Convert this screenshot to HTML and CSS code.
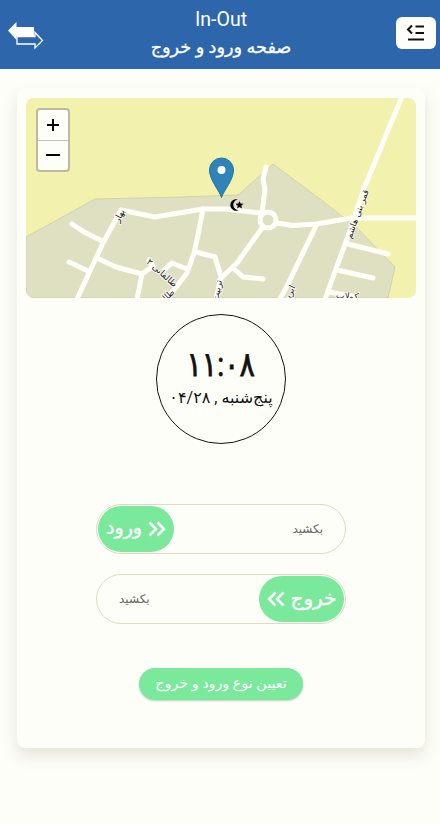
FILE: index.html
```html
<!DOCTYPE html>
<html lang="fa" dir="rtl">
<head>
<meta charset="utf-8">
<meta name="viewport" content="width=device-width, initial-scale=1">
<title>In-Out</title>
<link rel="stylesheet" href="styles.css">
</head>
<body>
<header class="header">
  <button class="menu" aria-label="منو">
    <svg width="20" height="18" viewBox="0 0 20 18" fill="none" stroke="#111" stroke-width="2"><path d="M6 1.500L2 5.500l4 4M9.500 2.500H18M9.500 9H18M2 15.500h16"/></svg>
  </button>
  <div class="titles">
    <div class="title-en">In-Out</div>
    <h1 class="title-fa">صفحه ورود و خروج</h1>
  </div>
  <svg class="swap" width="37" height="30" viewBox="0 0 37 30"><path d="M1 10.500L9.500 2v5H27v9H9.500v4z" fill="#fff"/><path d="M10 16.500h18V12.500l7.500 8-7.500 7.500v-4H10z" fill="#2d66ab" stroke="#fff" stroke-width="1.300"/></svg>
</header>
<main class="card">
  <div class="map">
    <svg class="map-canvas" viewBox="26 98 390 200" width="390" height="200">
      <path class="area" d="M26 237L95 199 180 197 238 195 273 164 320 199 357 228 395 267 388 298H26z"/>
      <g class="roads">
        <path d="M121 210L103 243 77 299"/>
        <path d="M121 210L155 217 203 209 226 209 260 213"/>
        <path d="M276 223L293 225.500 316 224 352 218H417"/>
        <path d="M403 94L363 191 352 225 325 299"/>
        <path d="M266 167L263 179 265 190 262 213"/>
        <path d="M72 224L84 232 102 241M69 262L88 271"/>
        <path d="M97 258L116 267 142 274 137 299M142 274L153 266 149 260"/>
        <path d="M165 269L172 263 187 269"/>
        <path d="M203 209L198 235 194 253 187 273 174 290 165 299"/>
        <path d="M196 252L215 257 221 277 216 299"/>
        <path d="M262 228L237 263 220 279M233 268L243 277 263 279"/>
        <path d="M316 226L286 288 280 299"/>
        <path d="M348 244L388 254M337 270L373 278M328 292L353 296"/>
        <circle cx="268" cy="220" r="8"/>
      </g>
      <g class="labels">
        <text transform="translate(122 217) rotate(-62)">بهار</text>
        <text transform="translate(160 275) rotate(42)">طالقانی ۲</text>
        <text transform="translate(164 303) rotate(-42)">طالقانی</text>
        <text transform="translate(220 291) rotate(-79)">تربیت</text>
        <text transform="translate(290 299) rotate(-65)">ابریشم</text>
        <text class="wide" transform="translate(360 215) rotate(-70)">قمر بنی هاشم</text>
        <text transform="translate(347 299) rotate(5)">کولاب</text>
      </g>
      <path fill="#000" d="M238 199.500a5.800 5.800 0 1 0 1 10.500 5 5 0 1 1-1-10.500zM239.500 201l1.100 2.600 2.900.2-2.200 1.900.7 2.800-2.500-1.500-2.400 1.500.6-2.800-2.200-1.900 2.900-.2z"/>
      <path d="M221.500 197.500C219 190 209.500 180 209.500 170a12 12 0 0 1 24 0c0 10-9.500 20-12 27.500z" fill="#2d84b8" stroke="#2875a3"/>
      <circle cx="221.500" cy="170" r="4" fill="#fff"/>
    </svg>
    <div class="zoom"><button class="zoom-in" aria-label="بزرگ‌نمایی"><svg width="14" height="14" viewBox="0 0 14 14"><path d="M1 7h12M7 1v12"/></svg></button><button aria-label="کوچک‌نمایی"><svg width="14" height="14" viewBox="0 0 14 14"><path d="M0 7h14"/></svg></button></div>
  </div>
  <div class="clock">
    <div class="time" dir="ltr">۱۱:۰۸</div>
    <div class="date">پنج‌شنبه , ۰۴/۲۸</div>
  </div>
  <div class="slider enter">
    <span class="hint">بکشید</span>
    <div class="knob"><svg class="chev" width="18" height="16" viewBox="0 0 18 16"><path d="M1.500 1.500L8 8l-6.500 6.500M9.500 1.500L16 8l-6.500 6.500"/></svg><span>ورود</span></div>
  </div>
  <div class="slider leave">
    <div class="knob"><span>خروج</span><svg class="chev" width="18" height="16" viewBox="0 0 18 16"><path d="M1.500 1.500L8 8l-6.500 6.500M9.500 1.500L16 8l-6.500 6.500"/></svg></div>
    <span class="hint">بکشید</span>
  </div>
  <button class="type">تعیین نوع ورود و خروج</button>
</main>
</body>
</html>
```
FILE: styles.css
```css
* { box-sizing: border-box; }
body { margin: 0; min-height: 824px; background: #fefef9; color: #111; font-family: Roboto, "DejaVu Sans", sans-serif; }
button { font: inherit; border: 0; padding: 0; }
.header { height: 69px; background: #2d66ab; display: flex; align-items: center; justify-content: space-between; padding: 0 4px 0 7px; }
.menu { width: 40px; height: 32px; border-radius: 6px; background: #fefef9; display: flex; align-items: center; justify-content: center; margin-top: -3px; }
.titles { color: #fff; text-align: center; padding: 0 0 1px 0; margin-right: -2px; }
.title-en { font-size: 19.5px; line-height: 26px; }
.title-fa { margin: 0; font-size: 17.7px; line-height: 28px; font-weight: 400; -webkit-text-stroke: .3px; }
.card { width: 408px; height: 660px; margin: 19px 15px 0 auto; padding: 10px 9px 0; border-radius: 8px; display: flex; flex-direction: column; align-items: center; box-shadow: 0 8px 16px rgba(60, 60, 0, .13); }
.map { position: relative; width: 390px; height: 200px; border-radius: 8px; overflow: hidden; background: #f2f2ae; flex: none; }
.map-canvas { display: block; }
.area { fill: #dfdfc2; stroke: #c8c8a4; stroke-width: .7; }
.roads { fill: none; stroke: #fffffa; stroke-width: 5; stroke-linecap: round; stroke-linejoin: round; }
.labels { font-family: "DejaVu Sans", sans-serif; font-size: 9px; text-anchor: middle; fill: #222; stroke: #fff; stroke-width: 1.500px; paint-order: stroke; }
.wide { font-size: 8.6px; }
.zoom { position: absolute; left: 10px; top: 10px; width: 34px; height: 64px; border: 2px solid #babaa0; border-radius: 4px; background: #fefef9; display: flex; flex-direction: column; }
.zoom button { flex: 1; background: none; display: flex; align-items: center; justify-content: center; }
.zoom .zoom-in { border-bottom: 1px solid #c4c4b8; }
.zoom path { stroke: #000; stroke-width: 2; }
.clock { width: 130px; height: 130px; margin-top: 16px; border: 1px solid #111; border-radius: 50%; display: flex; flex-direction: column; align-items: center; padding-top: 29px; flex: none; white-space: nowrap; }
.time { font-size: 34px; line-height: 40px; letter-spacing: -2.5px; -webkit-text-stroke: .8px; transform: scaleX(.84); }
.date { font-size: 16px; line-height: 27px; }
.slider { width: 250px; height: 50px; border: 1px solid #dcdcc0; border-radius: 25px; padding: 1px; display: flex; align-items: center; justify-content: space-between; flex: none; }
.enter { margin-top: 60px; }
.leave { margin-top: 20px; }
.hint { font-size: 12px; color: #666; padding: 0 21px; }
.knob { width: 76px; height: 46px; border-radius: 23px; background: #7ae99b; color: #fff; font-size: 19px; line-height: 24px; display: flex; align-items: center; justify-content: center; gap: 6px; -webkit-text-stroke: .4px; }
.knob span { margin-top: -2px; }
.leave .knob { width: 85px; font-size: 20px; }
.chev { fill: none; stroke: #fff; stroke-width: 2.500; }
.leave .chev { transform: scaleX(-1); }
.type { width: 164px; height: 32px; margin-top: 44px; padding-bottom: 2px; border-radius: 16px; background: #7ae99b; color: #fff; font-size: 14.3px; box-shadow: 0 1px 2px rgba(60, 80, 60, .3); }
```
